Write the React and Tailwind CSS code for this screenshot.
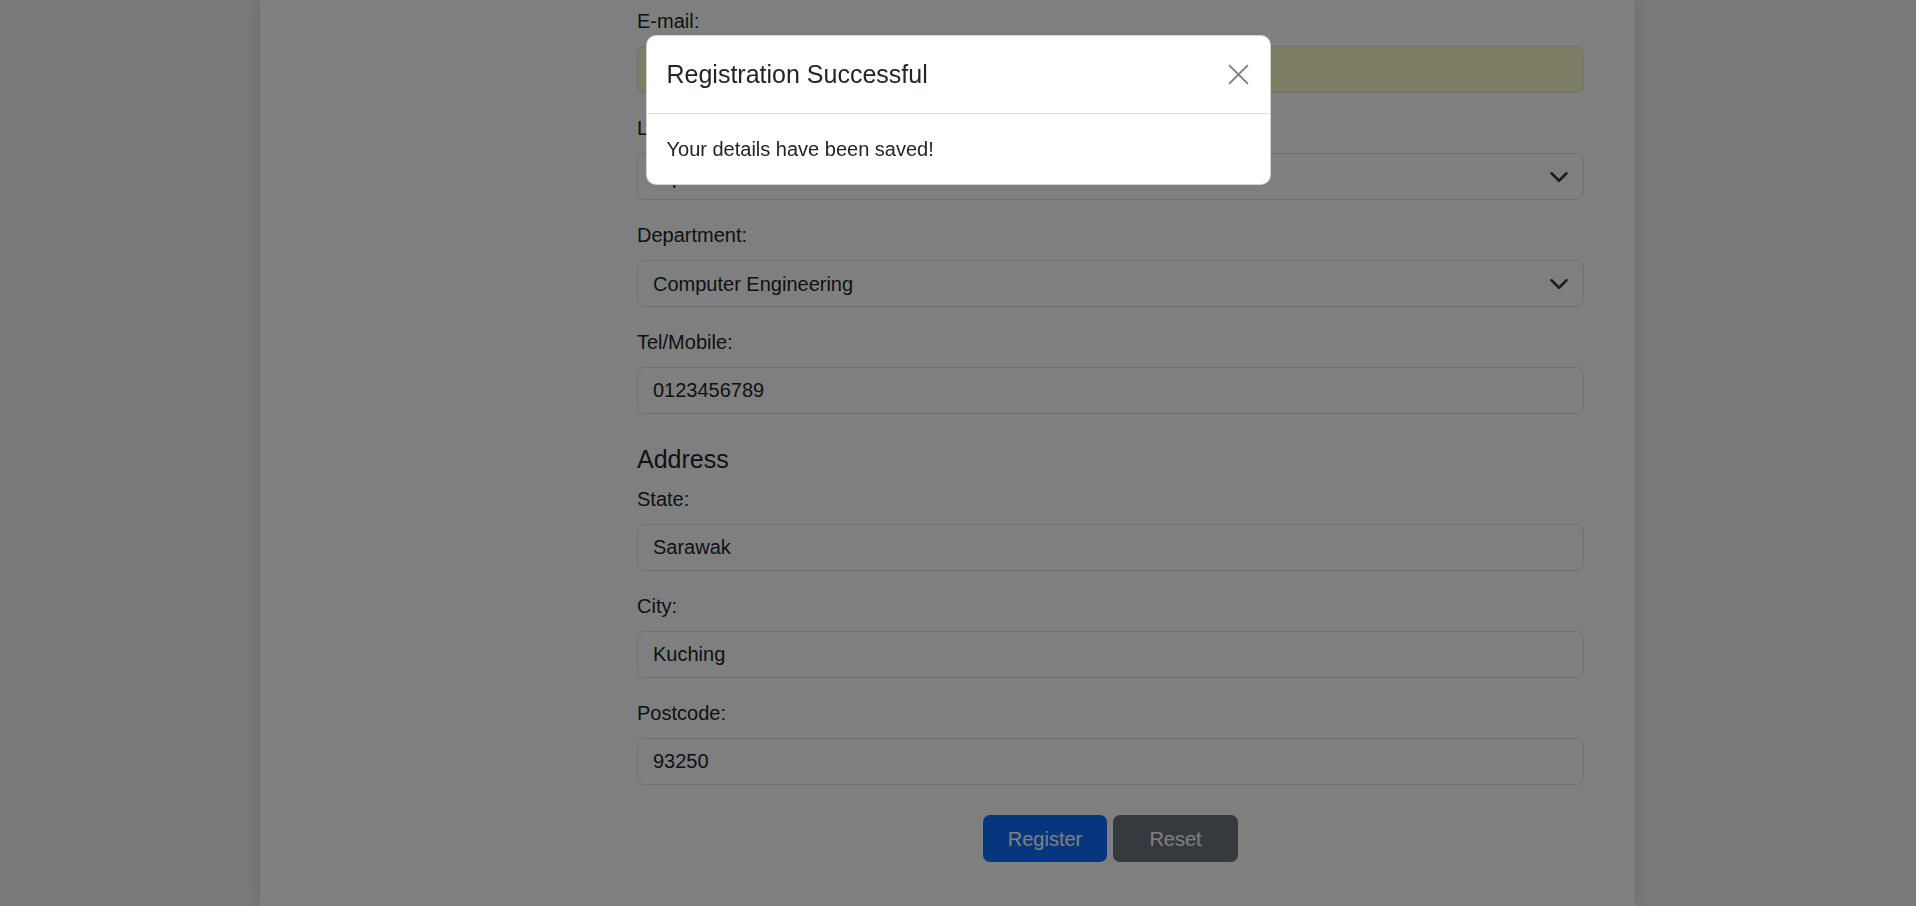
import { useState } from 'react'

const fieldClass =
  'block h-[47px] w-full appearance-none rounded-[7px] border border-[#dee2e6] px-[15px] text-[20px] leading-[30px] text-[#212529] outline-none'

function Label({ children }) {
  return (
    <label className="mb-[10px] block text-[20px] leading-[30px] text-[#212529]">
      {children}
    </label>
  )
}

function TextField({ label, value, autofilled }) {
  return (
    <div className="mb-[20px]">
      <Label>{label}</Label>
      <input
        readOnly
        value={value}
        className={`${fieldClass} ${autofilled ? 'bg-[#fafac6]' : 'bg-white'}`}
      />
    </div>
  )
}

function SelectField({ label, value, options }) {
  return (
    <div className="mb-[20px]">
      <Label>{label}</Label>
      <div className="relative">
        <select value={value} onChange={() => {}} className={`${fieldClass} bg-white pr-[45px]`}>
          {options.map((o) => (
            <option key={o}>{o}</option>
          ))}
        </select>
        <svg
          viewBox="0 0 16 16"
          className="pointer-events-none absolute right-[15px] top-1/2 h-[20px] w-[20px] -translate-y-1/2"
          fill="none"
          stroke="#343a40"
          strokeWidth="2"
          strokeLinecap="round"
          strokeLinejoin="round"
        >
          <path d="m2 5 6 6 6-6" />
        </svg>
      </div>
    </div>
  )
}

function SuccessModal({ onClose }) {
  return (
    <div className="fixed inset-0 z-50">
      <div className="absolute inset-0 bg-black/50" />
      <div className="relative mx-auto mt-[35px] w-[625px] rounded-[10px] border border-black/[0.175] bg-white">
        <div className="flex items-center justify-between border-b border-[#dee2e6] p-[20px]">
          <h5 className="text-[25px] leading-[37px] text-[#212529]">Registration Successful</h5>
          <button
            type="button"
            onClick={onClose}
            className="-mr-[4px] flex h-[30px] w-[30px] items-center justify-center opacity-50"
          >
            <svg viewBox="0 0 20 20" className="h-[21px] w-[21px]" stroke="#000" strokeWidth="1.8" fill="none">
              <path d="M1 1 19 19M19 1 1 19" />
            </svg>
          </button>
        </div>
        <div className="p-[20px] text-[20px] leading-[30px] text-[#212529]">
          Your details have been saved!
        </div>
      </div>
    </div>
  )
}

export default function App() {
  const [open, setOpen] = useState(true)

  return (
    <div
      className="relative h-[906px] overflow-hidden bg-[#f1f3f6]"
      style={{ fontFamily: '"Liberation Sans", Arial, sans-serif' }}
    >
      <div className="ml-[260px] flex h-full w-[1375px] bg-white shadow-[0_0_18px_rgba(0,0,0,0.12)]">
        <div className="w-[377px] shrink-0" />
        <form className="w-[947px] pt-[6px]" onSubmit={(e) => e.preventDefault()}>
          <TextField label="E-mail:" value="" autofilled />
          <SelectField label="Level:" value="Diploma" options={['Diploma', 'Degree', 'Master']} />
          <SelectField
            label="Department:"
            value="Computer Engineering"
            options={['Computer Engineering', 'Software Engineering', 'Electrical Engineering']}
          />
          <TextField label="Tel/Mobile:" value="0123456789" />

          <h5 className="mb-[10px] mt-[30px] text-[25px] leading-[30px] text-[#212529]">Address</h5>
          <TextField label="State:" value="Sarawak" />
          <TextField label="City:" value="Kuching" />
          <TextField label="Postcode:" value="93250" />

          <div className="mt-[30px] flex justify-center gap-[6px]">
            <button
              type="submit"
              className="h-[47px] w-[124px] rounded-[7px] bg-[#0d6efd] text-[20px] text-white"
            >
              Register
            </button>
            <button
              type="reset"
              className="h-[47px] w-[125px] rounded-[7px] bg-[#6c757d] text-[20px] text-white"
            >
              Reset
            </button>
          </div>
        </form>
      </div>
      {open && <SuccessModal onClose={() => setOpen(false)} />}
    </div>
  )
}
